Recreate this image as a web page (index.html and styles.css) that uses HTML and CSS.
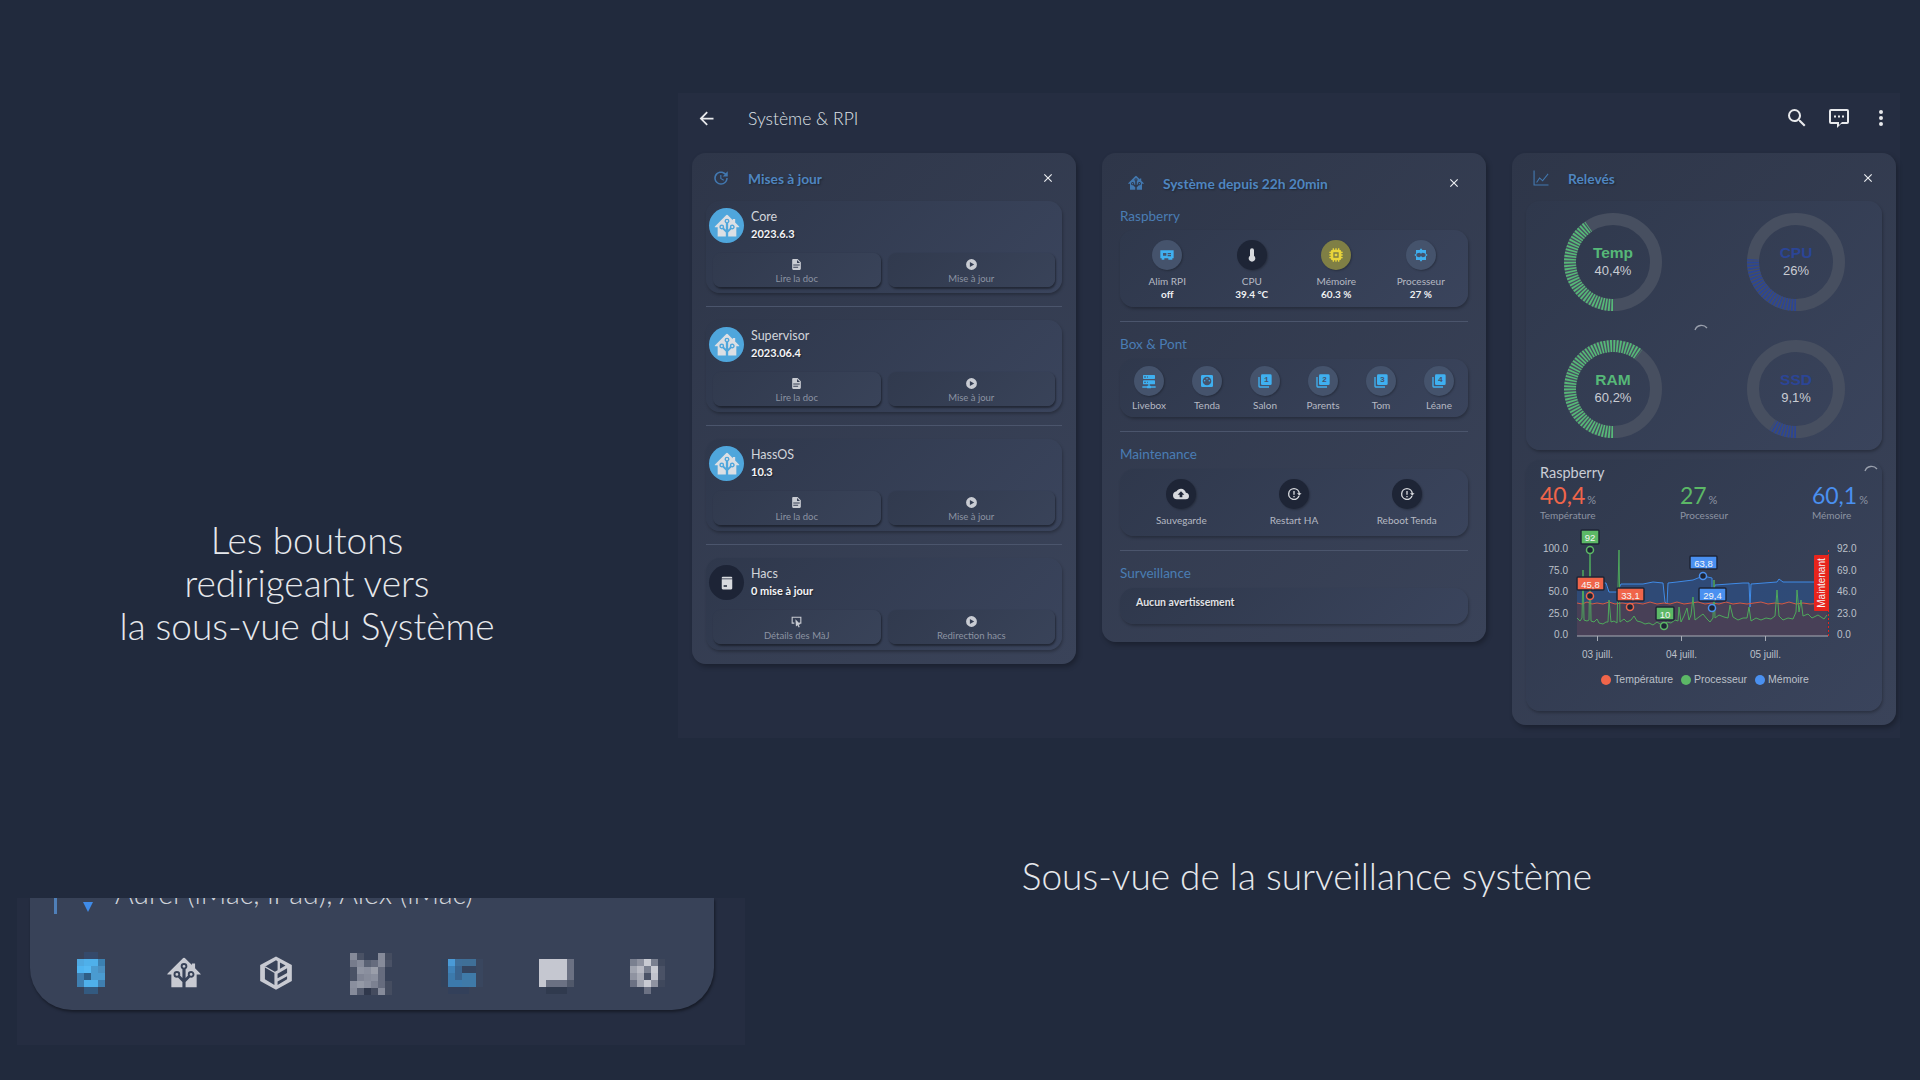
FILE: index.html
```html
<!DOCTYPE html>
<html lang="fr">
<head>
  <meta charset="UTF-8" />
  <title>Système &amp; RPI</title>
  <link rel="stylesheet" href="styles.css">
</head>
<body>
  <svg class="icon-defs" aria-hidden="true">
    <symbol id="i-ha" viewBox="0 0 24 24"><path d="M21.8,13H20V21H13V17.67L15.79,14.88L16.5,15C17.66,15 18.6,14.06 18.6,12.9C18.6,11.74 17.66,10.8 16.5,10.8A2.1,2.1 0 0,0 14.4,12.9L14.5,13.61L13,15.13V9.65C13.66,9.29 14.1,8.6 14.1,7.8A2.1,2.1 0 0,0 12,5.7A2.1,2.1 0 0,0 9.9,7.8C9.9,8.6 10.34,9.29 11,9.65V15.13L9.5,13.61L9.6,12.9A2.1,2.1 0 0,0 7.5,10.8A2.1,2.1 0 0,0 5.4,12.9A2.1,2.1 0 0,0 7.5,15L8.21,14.88L11,17.67V21H4V13H2.25C1.83,13 1.42,13 1.42,12.79C1.43,12.57 1.85,12.15 2.28,11.72L11,3C11.33,2.67 11.67,2.33 12,2.33C12.33,2.33 12.67,2.67 13,3L17,7V6H19V9L21.78,11.78C22.18,12.18 22.59,12.59 22.6,12.8C22.6,13 22.2,13 21.8,13M7.5,12A0.9,0.9 0 0,1 8.4,12.9A0.9,0.9 0 0,1 7.5,13.8A0.9,0.9 0 0,1 6.6,12.9A0.9,0.9 0 0,1 7.5,12M16.5,12C17,12 17.4,12.4 17.4,12.9C17.4,13.4 17,13.8 16.5,13.8A0.9,0.9 0 0,1 15.6,12.9A0.9,0.9 0 0,1 16.5,12M12,6.9C12.5,6.9 12.9,7.3 12.9,7.8C12.9,8.3 12.5,8.7 12,8.7C11.5,8.7 11.1,8.3 11.1,7.8C11.1,7.3 11.5,6.9 12,6.9Z"/></symbol>
    <symbol id="i-close" viewBox="0 0 24 24"><path d="M19,6.41L17.59,5L12,10.59L6.41,5L5,6.41L10.59,12L5,17.59L6.41,19L12,13.41L17.59,19L19,17.59L13.41,12L19,6.41Z"/></symbol>
    <symbol id="i-doc" viewBox="0 0 24 24"><path d="M13,9H18.5L13,3.5V9M6,2H14L20,8V20A2,2 0 0,1 18,22H6C4.89,22 4,21.1 4,20V4C4,2.89 4.89,2 6,2M15,18V16H6V18H15M18,14V12H6V14H18Z"/></symbol>
    <symbol id="i-play" viewBox="0 0 24 24"><path d="M12,2A10,10 0 0,0 2,12A10,10 0 0,0 12,22A10,10 0 0,0 22,12A10,10 0 0,0 12,2M9,16.5V7.5L17,12L9,16.5Z"/></symbol>
    <symbol id="i-restart" viewBox="0 0 24 24"><path d="M12,3A9,9 0 1,0 20.6,14.6H18.5A7,7 0 1,1 12,5A7,7 0 0,1 18.9,11H16.4L19.9,14.2L23.4,11H20.9A9,9 0 0,0 12,3M11,7.5H13V13H11V7.5M11,15H13V17H11V15Z"/></symbol>
    <symbol id="i-stack" viewBox="0 0 24 24"><path d="M2,6H4V20H18V22H4A2,2 0 0,1 2,20V6Z"/><path d="M8,2H20A2,2 0 0,1 22,4V16A2,2 0 0,1 20,18H8A2,2 0 0,1 6,16V4A2,2 0 0,1 8,2Z"/></symbol>
  </svg>

  <div class="top-row">
    <p class="caption intro">Les boutons<br>redirigeant vers<br>la sous-vue du Système</p>

    <main class="screen">
      <header class="topbar">
        <svg class="top-icon back" viewBox="0 0 24 24"><path d="M20,11V13H8L13.5,18.5L12.08,19.92L4.16,12L12.08,4.08L13.5,5.5L8,11H20Z"/></svg>
        <h1>Système &amp; RPI</h1>
        <svg class="top-icon" viewBox="0 0 24 24"><path d="M9.5,3A6.5,6.5 0 0,1 16,9.5C16,11.11 15.41,12.59 14.44,13.73L14.71,14H15.5L20.5,19L19,20.5L14,15.5V14.71L13.73,14.44C12.59,15.41 11.11,16 9.5,16A6.5,6.5 0 0,1 3,9.5A6.5,6.5 0 0,1 9.5,3M9.5,5C7,5 5,7 5,9.5C5,12 7,14 9.5,14C12,14 14,12 14,9.5C14,7 12,5 9.5,5Z"/></svg>
        <svg class="top-icon" viewBox="0 0 24 24"><path d="M4,3H20A2,2 0 0,1 22,5V16A2,2 0 0,1 20,18H14L10,22V18H4A2,2 0 0,1 2,16V5A2,2 0 0,1 4,3M4,5V16H12V19L15,16H20V5H4M7,9.5H9V11.5H7V9.5M11,9.5H13V11.5H11V9.5M15,9.5H17V11.5H15V9.5Z"/></svg>
        <svg class="top-icon" viewBox="0 0 24 24"><path d="M12,16A2,2 0 0,1 14,18A2,2 0 0,1 12,20A2,2 0 0,1 10,18A2,2 0 0,1 12,16M12,10A2,2 0 0,1 14,12A2,2 0 0,1 12,14A2,2 0 0,1 10,12A2,2 0 0,1 12,10M12,4A2,2 0 0,1 14,6A2,2 0 0,1 12,8A2,2 0 0,1 10,6A2,2 0 0,1 12,4Z"/></svg>
      </header>

      <div class="columns">
        <!-- mises a jour -->
        <section class="card">
          <div class="card-head">
            <svg class="head-icon" viewBox="0 0 24 24"><path d="M21,10.12H14.22L16.96,7.3C14.23,4.6 9.81,4.5 7.08,7.2C4.35,9.91 4.35,14.28 7.08,17C9.81,19.7 14.23,19.7 16.96,17C18.32,15.65 19,14.08 19,12.1H21C21,14.08 20.12,16.65 18.36,18.39C14.85,21.87 9.15,21.87 5.64,18.39C2.14,14.92 2.11,9.28 5.62,5.81C9.13,2.34 14.76,2.34 18.27,5.81L21,3V10.12M12.5,8V12.25L16,14.33L15.28,15.54L11,13V8H12.5Z"/></svg>
            <h2>Mises à jour</h2>
            <svg class="close"><use href="#i-close"/></svg>
          </div>

          <div class="update">
            <div class="update-info">
              <span class="avatar"><svg><use href="#i-ha"/></svg></span>
              <div><div class="update-name">Core</div><div class="update-version">2023.6.3</div></div>
            </div>
            <div class="update-actions">
              <div class="action"><svg><use href="#i-doc"/></svg><span>Lire la doc</span></div>
              <div class="action"><svg><use href="#i-play"/></svg><span>Mise à jour</span></div>
            </div>
          </div>
          <hr>
          <div class="update">
            <div class="update-info">
              <span class="avatar"><svg><use href="#i-ha"/></svg></span>
              <div><div class="update-name">Supervisor</div><div class="update-version">2023.06.4</div></div>
            </div>
            <div class="update-actions">
              <div class="action"><svg><use href="#i-doc"/></svg><span>Lire la doc</span></div>
              <div class="action"><svg><use href="#i-play"/></svg><span>Mise à jour</span></div>
            </div>
          </div>
          <hr>
          <div class="update">
            <div class="update-info">
              <span class="avatar"><svg><use href="#i-ha"/></svg></span>
              <div><div class="update-name">HassOS</div><div class="update-version">10.3</div></div>
            </div>
            <div class="update-actions">
              <div class="action"><svg><use href="#i-doc"/></svg><span>Lire la doc</span></div>
              <div class="action"><svg><use href="#i-play"/></svg><span>Mise à jour</span></div>
            </div>
          </div>
          <hr>
          <div class="update">
            <div class="update-info">
              <span class="avatar dark">
                <svg viewBox="0 0 24 24"><path d="M5,5A1.5,1.5 0 0,1 6.5,3.5H17.5A1.5,1.5 0 0,1 19,5V6H5V5M5,7H19V19A1.5,1.5 0 0,1 17.5,20.5H6.5A1.5,1.5 0 0,1 5,19V7M7.5,15V17H12V15H7.5Z"/></svg>
              </span>
              <div><div class="update-name">Hacs</div><div class="update-version">0 mise à jour</div></div>
            </div>
            <div class="update-actions">
              <div class="action">
                <svg viewBox="0 0 24 24"><path d="M3,3H21V16H17V14H19V5H5V14H8V16H3V3M10,8L19,17L16,18L18,22L16,23L14,19L11,21L10,8Z"/></svg>
                <span>Détails des MàJ</span>
              </div>
              <div class="action"><svg><use href="#i-play"/></svg><span>Redirection hacs</span></div>
            </div>
          </div>
        </section>

        <!-- systeme -->
        <section class="card card-system">
          <div class="card-head">
            <svg class="head-icon"><use href="#i-ha"/></svg>
            <h2>Système depuis 22h 20min</h2>
            <svg class="close"><use href="#i-close"/></svg>
          </div>

          <h3>Raspberry</h3>
          <div class="tiles tiles-rpi">
            <div class="tile">
              <span class="round blue"><svg viewBox="0 0 24 24"><path d="M2,5H22V17H20V19H14V17H8V19H4V17H2V5M6,9V13H11V9H6M13,9V11H18V9H13M13,12V14H18V12H13Z"/></svg></span>
              <span class="tile-label">Alim RPI</span><b>off</b>
            </div>
            <div class="tile">
              <span class="round dark"><svg viewBox="0 0 24 24"><path d="M15,13V5A3,3 0 0,0 9,5V13A5,5 0 1,0 15,13Z"/></svg></span>
              <span class="tile-label">CPU</span><b>39.4 °C</b>
            </div>
            <div class="tile">
              <span class="round yellow"><svg viewBox="0 0 24 24"><path d="M7,4H17A3,3 0 0,1 20,7H22V9H20V11H22V13H20V15H22V17H20A3,3 0 0,1 17,20V22H15V20H13V22H11V20H9V22H7V20A3,3 0 0,1 4,17H2V15H4V13H2V11H4V9H2V7H4A3,3 0 0,1 7,4M7,2H9V4H7V2M11,2H13V4H11V2M15,2H17V4H15V2M8,8V16H16V8H8M10,10H14V14H10V10Z" fill-rule="evenodd"/></svg></span>
              <span class="tile-label">Mémoire</span><b>60.3 %</b>
            </div>
            <div class="tile">
              <span class="round blue"><svg viewBox="0 0 24 24"><path d="M12,2L14,4.5H19.5V10L22,12L19.5,14V19.5H14L12,22L10,19.5H4.5V14L2,12L4.5,10V4.5H10L12,2M8,9A3,3 0 0,0 8,15A3,3 0 0,0 12,13.2A3,3 0 0,0 16,15A3,3 0 0,0 16,9A3,3 0 0,0 12,10.8A3,3 0 0,0 8,9Z"/></svg></span>
              <span class="tile-label">Processeur</span><b>27 %</b>
            </div>
          </div>
          <hr>

          <h3>Box &amp; Pont</h3>
          <div class="tiles tiles-box">
            <div class="tile">
              <span class="round blue"><svg viewBox="0 0 24 24"><path d="M13,19H14A1,1 0 0,1 15,20H22V22H15A1,1 0 0,1 14,23H10A1,1 0 0,1 9,22H2V20H9A1,1 0 0,1 10,19H11V17H4A1,1 0 0,1 3,16V12A1,1 0 0,1 4,11H20A1,1 0 0,1 21,12V16A1,1 0 0,1 20,17H13V19M4,3H20A1,1 0 0,1 21,4V8A1,1 0 0,1 20,9H4A1,1 0 0,1 3,8V4A1,1 0 0,1 4,3M9,7H10V5H9V7M9,15H10V13H9V15M5,5V7H7V5H5M5,13V15H7V13H5Z"/></svg></span>
              <span class="tile-label">Livebox</span>
            </div>
            <div class="tile">
              <span class="round blue"><svg viewBox="0 0 24 24"><path d="M5,3H19A2,2 0 0,1 21,5V19A2,2 0 0,1 19,21H5A2,2 0 0,1 3,19V5A2,2 0 0,1 5,3M12,5.5A6.5,6.5 0 1,0 12,18.5A6.5,6.5 0 1,0 12,5.5M8.5,10.5A1.2,1.2 0 1,1 8.5,12.9A1.2,1.2 0 1,1 8.5,10.5M15.5,10.5A1.2,1.2 0 1,1 15.5,12.9A1.2,1.2 0 1,1 15.5,10.5M12,7.5A1.2,1.2 0 1,1 12,9.9A1.2,1.2 0 1,1 12,7.5Z" fill-rule="evenodd"/></svg></span>
              <span class="tile-label">Tenda</span>
            </div>
            <div class="tile">
              <span class="round blue"><svg class="stack" viewBox="0 0 24 24"><use href="#i-stack"/><text x="14" y="14">1</text></svg></span>
              <span class="tile-label">Salon</span>
            </div>
            <div class="tile">
              <span class="round blue"><svg class="stack" viewBox="0 0 24 24"><use href="#i-stack"/><text x="14" y="14">2</text></svg></span>
              <span class="tile-label">Parents</span>
            </div>
            <div class="tile">
              <span class="round blue"><svg class="stack" viewBox="0 0 24 24"><use href="#i-stack"/><text x="14" y="14">3</text></svg></span>
              <span class="tile-label">Tom</span>
            </div>
            <div class="tile">
              <span class="round blue"><svg class="stack" viewBox="0 0 24 24"><use href="#i-stack"/><text x="14" y="14">4</text></svg></span>
              <span class="tile-label">Léane</span>
            </div>
          </div>
          <hr>

          <h3>Maintenance</h3>
          <div class="tiles tiles-maint">
            <div class="tile">
              <span class="round dark"><svg viewBox="0 0 24 24"><path d="M14,13V17H10V13H7L12,8L17,13H14M19.35,10.03C18.67,6.59 15.64,4 12,4C9.11,4 6.6,5.64 5.35,8.03C2.34,8.36 0,10.9 0,14A6,6 0 0,0 6,20H19A5,5 0 0,0 24,15C24,12.36 21.95,10.22 19.35,10.03Z"/></svg></span>
              <span class="tile-label">Sauvegarde</span>
            </div>
            <div class="tile">
              <span class="round dark"><svg><use href="#i-restart"/></svg></span>
              <span class="tile-label">Restart HA</span>
            </div>
            <div class="tile">
              <span class="round dark"><svg><use href="#i-restart"/></svg></span>
              <span class="tile-label">Reboot Tenda</span>
            </div>
          </div>
          <hr>

          <h3>Surveillance</h3>
          <div class="notice">Aucun avertissement</div>
        </section>

        <!-- releves -->
        <section class="card">
          <div class="card-head">
            <svg class="head-icon" viewBox="0 0 24 24"><path d="M2,2H3.5V20.5H22V22H2V2M5.5,17.5L10,11L14,14.5L21,6L22,7L14.2,16.5L10.3,13L6.7,18.3L5.5,17.5Z"/></svg>
            <h2>Relevés</h2>
            <svg class="close"><use href="#i-close"/></svg>
          </div>

          <div class="gauges">
            <svg class="gauge" viewBox="0 0 100 100">
              <circle class="track" cx="50" cy="50" r="43"/>
              <path class="arc green" d="M50,93A43,43 0 0,1 25.6,14.6"/>
              <text class="g-name green" x="50" y="46">Temp</text>
              <text class="g-val" x="50" y="63">40,4%</text>
            </svg>
            <svg class="gauge" viewBox="0 0 100 100">
              <circle class="track" cx="50" cy="50" r="43"/>
              <path class="arc navy" d="M50,93A43,43 0 0,1 7.1,47.3"/>
              <text class="g-name navy" x="50" y="46">CPU</text>
              <text class="g-val" x="50" y="63">26%</text>
            </svg>
            <svg class="gauge" viewBox="0 0 100 100">
              <circle class="track" cx="50" cy="50" r="43"/>
              <path class="arc green" d="M50,93A43,43 0 1,1 75.7,15.5"/>
              <text class="g-name green" x="50" y="46">RAM</text>
              <text class="g-val" x="50" y="63">60,2%</text>
            </svg>
            <svg class="gauge" viewBox="0 0 100 100">
              <circle class="track" cx="50" cy="50" r="43"/>
              <path class="arc navy" d="M50,93A43,43 0 0,1 26.7,86.2"/>
              <text class="g-name navy" x="50" y="46">SSD</text>
              <text class="g-val" x="50" y="63">9,1%</text>
            </svg>
            <svg class="spinner gauges-spinner" viewBox="0 0 16 16"><path d="M2,8A7,7 0 0,1 14,6"/></svg>
          </div>

          <div class="graph">
            <svg class="spinner graph-spinner" viewBox="0 0 16 16"><path d="M2,8A7,7 0 0,1 14,6"/></svg>
            <div class="graph-title">Raspberry</div>
            <div class="stats">
              <div class="stat"><div><span class="stat-num red">40,4</span><span class="stat-unit">%</span></div><div class="stat-label">Température</div></div>
              <div class="stat"><div><span class="stat-num green">27</span><span class="stat-unit">%</span></div><div class="stat-label">Processeur</div></div>
              <div class="stat"><div><span class="stat-num azure">60,1</span><span class="stat-unit">%</span></div><div class="stat-label">Mémoire</div></div>
            </div>

            <!-- viewBox in page coordinates so the series read straight off the reference -->
            <svg class="chart" viewBox="1527 525 354 142">
              <path class="area-blue" d="M1577,583H1606L1609,592H1617L1621,584H1643L1653,582L1663,583L1665,602L1667,604L1668,583L1677,582L1693,580L1703,576L1712,578L1712,600L1715,585L1743,583H1749L1750,607L1751,584L1777,582L1779,579L1783,582L1827,582V603H1577Z"/>
              <path class="area-red" d="M1577,603H1827V636H1577Z"/>
              <path class="line-blue" d="M1577,583H1606L1609,592H1617L1621,584H1643L1653,582L1663,583L1665,602L1667,604L1668,583L1677,582L1693,580L1703,576L1712,578L1712,600L1715,585L1743,583H1749L1750,607L1751,584L1777,582L1779,579L1783,582L1827,582"/>
              <path class="line-red" d="M1577,603L1582,604L1587,602L1592,604L1597,603L1603,604L1609,602L1615,604L1622,603L1629,604L1636,603L1643,604L1650,602L1657,604L1664,603L1670,604L1677,602L1684,604L1691,603L1698,602L1705,604L1712,603L1719,604L1726,602L1733,604L1740,603L1747,604L1754,603L1761,602L1768,604L1775,603L1782,604L1789,602L1796,604L1803,603L1810,604L1827,603"/>
              <path class="line-green" d="M1577,618L1580,621L1582,618L1583,570L1584,620L1587,621L1589,620L1590,550L1591,621L1594,622L1597,619L1599,623L1603,624L1606,622L1608,622L1609,600L1611,622L1614,621L1617,623L1619,550L1620,622L1624,619L1627,622L1631,620L1634,616L1637,621L1641,622L1645,624L1649,623L1653,625L1657,622L1660,624L1664,625L1667,622L1671,623L1675,620L1678,621L1679,607L1681,622L1684,616L1687,608L1689,620L1691,615L1693,597L1695,620L1699,617L1703,614L1707,619L1710,622L1713,618L1714,580L1715,618L1719,615L1724,617L1728,618L1730,605L1733,617L1738,620L1743,618L1747,618L1749,607L1751,621L1756,618L1761,620L1766,618L1771,619L1775,616L1777,590L1779,616L1783,620L1788,618L1793,619L1796,612L1797,590L1799,612L1801,600L1803,616L1808,614L1812,618L1818,615L1824,619L1827,615"/>

              <line class="axis" x1="1577" y1="636" x2="1828" y2="636"/>
              <line class="axis" x1="1597.5" y1="636" x2="1597.5" y2="641"/>
              <line class="axis" x1="1681.5" y1="636" x2="1681.5" y2="641"/>
              <line class="axis" x1="1765.5" y1="636" x2="1765.5" y2="641"/>
              <line class="now-line" x1="1828.5" y1="550" x2="1828.5" y2="636"/>

              <g class="y-left">
                <text x="1568" y="552">100.0</text><text x="1568" y="573.5">75.0</text><text x="1568" y="595">50.0</text><text x="1568" y="616.5">25.0</text><text x="1568" y="638">0.0</text>
              </g>
              <g class="y-right">
                <text x="1837" y="552">92.0</text><text x="1837" y="573.5">69.0</text><text x="1837" y="595">46.0</text><text x="1837" y="616.5">23.0</text><text x="1837" y="638">0.0</text>
              </g>
              <g class="x-labels">
                <text x="1597.5" y="658">03 juill.</text><text x="1681.5" y="658">04 juill.</text><text x="1765.5" y="658">05 juill.</text>
              </g>

              <circle class="mark m-green" cx="1590" cy="550" r="3.5"/>
              <circle class="mark m-red" cx="1590" cy="596" r="3.5"/>
              <circle class="mark m-red" cx="1630" cy="607" r="3.5"/>
              <circle class="mark m-green" cx="1664" cy="626" r="3.5"/>
              <circle class="mark m-blue" cx="1703" cy="576" r="3.5"/>
              <circle class="mark m-blue" cx="1712" cy="608" r="3.5"/>

              <rect class="tag t-green" x="1581" y="530" width="18" height="14" rx="1"/><text class="tag-text" x="1590" y="541">92</text>
              <rect class="tag t-red" x="1577" y="577" width="27" height="13" rx="1"/><text class="tag-text" x="1590.5" y="588">45,8</text>
              <rect class="tag t-red" x="1617" y="588" width="27" height="13" rx="1"/><text class="tag-text" x="1630.5" y="599">33,1</text>
              <rect class="tag t-green" x="1656" y="607" width="18" height="13" rx="1"/><text class="tag-text" x="1665" y="618">10</text>
              <rect class="tag t-blue" x="1690" y="556" width="27" height="13" rx="1"/><text class="tag-text" x="1703.5" y="567">63,8</text>
              <rect class="tag t-blue" x="1699" y="588" width="27" height="13" rx="1"/><text class="tag-text" x="1712.5" y="599">29,4</text>

              <rect class="now-box" x="1814" y="555" width="15" height="56" rx="1"/>
              <text class="now-text" transform="translate(1825,583) rotate(-90)">Maintenant</text>
            </svg>

            <div class="legend">
              <span><i class="dot bg-red"></i>Température</span>
              <span><i class="dot bg-green"></i>Processeur</span>
              <span><i class="dot bg-blue"></i>Mémoire</span>
            </div>
          </div>
        </section>
      </div>
    </main>
  </div>

  <div class="bottom-row">
    <div class="crop">
      <div class="nav-card">
        <i class="nav-bar"></i>
        <i class="nav-pin"></i>
        <div class="nav-text">Aurel (iMac, iPad), Alex (iMac)</div>
        <div class="nav-icons">
          <svg class="pixels w4" viewBox="0 0 4 6">
            <rect x="1" y="0" fill="#35496a"/><rect x="2" y="0" fill="#35496a"/>
            <rect x="0" y="1" fill="#4fa8e0"/><rect x="1" y="1" fill="#4fb0ea"/><rect x="2" y="1" fill="#4fb0ea"/><rect x="3" y="1" fill="#3c80b0"/>
            <rect x="0" y="2" fill="#4fb4f0"/><rect x="1" y="2" fill="#55b8f2"/><rect x="2" y="2" fill="#4a9bd0"/><rect x="3" y="2" fill="#4a8fc0"/>
            <rect x="0" y="3" fill="#3f7fb0"/><rect x="1" y="3" fill="#2f5e85"/><rect x="2" y="3" fill="#4a9bd0"/><rect x="3" y="3" fill="#4a9bd0"/>
            <rect x="0" y="4" fill="#3f7fb0"/><rect x="1" y="4" fill="#4fb0ea"/><rect x="2" y="4" fill="#4fb0ea"/><rect x="3" y="4" fill="#3f7fb0"/>
            <rect x="1" y="5" fill="#335a80"/><rect x="2" y="5" fill="#335a80"/>
          </svg>
          <svg class="nav-svg"><use href="#i-ha"/></svg>
          <svg class="nav-svg" viewBox="0 0 24 24"><path d="M12,1.5L22,7V17L12,22.5L2,17V7L12,1.5M12,4L5,8V16L11,19.5V12L5,8.5V7.5L11.3,11.2L13,10.2V4.6L12,4M14.5,5.4V9.3L18,7.3L14.5,5.4M19,9L13,12.5V15.3L19,12V9M19,14L13,17.3V19.5L19,16V14Z" fill-rule="evenodd"/></svg>
          <svg class="pixels w6" viewBox="0 0 6 6">
            <rect x="0" y="0" fill="#858a99"/><rect x="1" y="0" fill="#4a5265"/><rect x="4" y="0" fill="#858a99"/><rect x="5" y="0" fill="#454d60"/>
            <rect x="0" y="1" fill="#777c8c"/><rect x="1" y="1" fill="#858a99"/><rect x="2" y="1" fill="#5a6274"/><rect x="3" y="1" fill="#666c7e"/><rect x="4" y="1" fill="#868b9a"/><rect x="5" y="1" fill="#4a5266"/>
            <rect x="0" y="2" fill="#4a5265"/><rect x="1" y="2" fill="#8f94a2"/><rect x="2" y="2" fill="#8a8f9e"/><rect x="3" y="2" fill="#9a9eaa"/><rect x="4" y="2" fill="#666c7e"/>
            <rect x="0" y="3" fill="#4a5265"/><rect x="1" y="3" fill="#7f8494"/><rect x="2" y="3" fill="#868b9a"/><rect x="3" y="3" fill="#8a8f9e"/><rect x="4" y="3" fill="#666c7e"/>
            <rect x="0" y="4" fill="#8a8f9e"/><rect x="1" y="4" fill="#9499a6"/><rect x="2" y="4" fill="#8a8f9e"/><rect x="3" y="4" fill="#7c8191"/><rect x="4" y="4" fill="#666c7e"/><rect x="5" y="4" fill="#454d60"/>
            <rect x="0" y="5" fill="#868b9a"/><rect x="1" y="5" fill="#555c6f"/><rect x="2" y="5" fill="#30384c"/><rect x="3" y="5" fill="#444b5e"/><rect x="4" y="5" fill="#868b9a"/><rect x="5" y="5" fill="#454d60"/>
          </svg>
          <svg class="pixels w6 short" viewBox="0 0 6 5">
            <rect x="0" y="0" fill="#34425a"/><rect x="1" y="0" fill="#4a9ad6"/><rect x="2" y="0" fill="#3f6f9a"/><rect x="3" y="0" fill="#3f6f97"/><rect x="4" y="0" fill="#3f6f97"/><rect x="5" y="0" fill="#39465e"/>
            <rect x="0" y="1" fill="#34425a"/><rect x="1" y="1" fill="#3f82b8"/><rect x="2" y="1" fill="#3a6590"/><rect x="3" y="1" fill="#34445f"/><rect x="4" y="1" fill="#34445f"/><rect x="5" y="1" fill="#39465e"/>
            <rect x="0" y="2" fill="#34425a"/><rect x="1" y="2" fill="#3c7aac"/><rect x="2" y="2" fill="#3a6590"/><rect x="3" y="2" fill="#3f7aa8"/><rect x="4" y="2" fill="#3f7aa8"/><rect x="5" y="2" fill="#39465e"/>
            <rect x="0" y="3" fill="#34425a"/><rect x="1" y="3" fill="#3c7aac"/><rect x="2" y="3" fill="#3c7aac"/><rect x="3" y="3" fill="#3f7aa8"/><rect x="4" y="3" fill="#3f7aa8"/><rect x="5" y="3" fill="#39465e"/>
            <rect x="1" y="4" fill="#33405a"/><rect x="2" y="4" fill="#33405a"/><rect x="3" y="4" fill="#33405a"/>
          </svg>
          <svg class="pixels w5" viewBox="0 0 5 5">
            <rect x="0" y="0" fill="#c5c7d0"/><rect x="1" y="0" fill="#c5c7d0"/><rect x="2" y="0" fill="#c5c7d0"/><rect x="3" y="0" fill="#c5c7d0"/><rect x="4" y="0" fill="#6b7183"/>
            <rect x="0" y="1" fill="#c5c7d0"/><rect x="1" y="1" fill="#c5c7d0"/><rect x="2" y="1" fill="#c5c7d0"/><rect x="3" y="1" fill="#c5c7d0"/><rect x="4" y="1" fill="#6b7183"/>
            <rect x="0" y="2" fill="#c5c7d0"/><rect x="1" y="2" fill="#c5c7d0"/><rect x="2" y="2" fill="#c5c7d0"/><rect x="3" y="2" fill="#c5c7d0"/><rect x="4" y="2" fill="#6b7183"/>
            <rect x="0" y="3" fill="#c5c7d0"/><rect x="1" y="3" fill="#6b7183"/><rect x="2" y="3" fill="#6b7183"/><rect x="3" y="3" fill="#6b7183"/><rect x="4" y="3" fill="#50586a"/>
            <rect x="1" y="4" fill="#303a4e"/><rect x="2" y="4" fill="#303a4e"/><rect x="3" y="4" fill="#303a4e"/>
          </svg>
          <svg class="pixels w5" viewBox="0 0 5 5">
            <rect x="0" y="0" fill="#7a8090"/><rect x="1" y="0" fill="#8f93a1"/><rect x="2" y="0" fill="#c8cad2"/><rect x="3" y="0" fill="#7a8090"/><rect x="4" y="0" fill="#3f485c"/>
            <rect x="0" y="1" fill="#a0a4b0"/><rect x="1" y="1" fill="#b8bac4"/><rect x="2" y="1" fill="#7a8090"/><rect x="3" y="1" fill="#c8cad2"/><rect x="4" y="1" fill="#4a5266"/>
            <rect x="0" y="2" fill="#8f93a1"/><rect x="1" y="2" fill="#a8abb6"/><rect x="2" y="2" fill="#4a5266"/><rect x="3" y="2" fill="#c0c2cc"/><rect x="4" y="2" fill="#4a5266"/>
            <rect x="0" y="3" fill="#6b7183"/><rect x="1" y="3" fill="#a0a4b0"/><rect x="2" y="3" fill="#c8cad2"/><rect x="3" y="3" fill="#8f93a1"/><rect x="4" y="3" fill="#3f485c"/>
            <rect x="2" y="4" fill="#6b7183"/>
          </svg>
        </div>
      </div>
    </div>
    <p class="caption outro">Sous-vue de la surveillance système</p>
  </div>
</body>
</html>
```

FILE: styles.css
```css
* {
  box-sizing: border-box;
}

body {
  margin: 0;
  width: 1920px;
  height: 1080px;
  overflow: hidden;
  background-color: #212a3d;
  font-family: "Lato", "Open Sans", sans-serif;
  color: #c9cdd6;
}

.icon-defs {
  display: none;
}

svg {
  fill: currentColor;
}

/* slide layout */
.top-row {
  display: flex;
  padding-top: 93px;
  height: 738px;
}

.caption {
  margin: 0;
  font-size: 37px;
  font-weight: 300;
  line-height: 43px;
  color: #e6e8ec;
  text-align: center;
}

.intro {
  width: 614px;
  margin: 425px 64px 0 0;
}

.bottom-row {
  display: flex;
  padding-top: 116px;
}

.outro {
  width: 1124px;
}

/* screen */
.screen {
  width: 1222px;
  height: 645px;
  background-color: #252d41;
}

.topbar {
  display: flex;
  align-items: center;
  height: 60px;
  padding: 0 7px 10px 16px;
  color: #e8e9ec;
}

.topbar h1 {
  flex: 1;
  margin: 0 0 0 30px;
  font-size: 17.5px;
  font-weight: 300;
  color: #dfe1e6;
}

.top-icon {
  width: 24px;
  height: 24px;
  margin-left: 18px;
}

.top-icon.back {
  width: 21px;
  height: 21px;
  margin-left: 2px;
  margin-right: 1px;
}

.columns {
  display: flex;
  align-items: flex-start;
  gap: 26px;
  padding-left: 14px;
}

.card {
  width: 384px;
  padding: 0 14px 14px;
  border-radius: 14px;
  background: linear-gradient(135deg, #2e3649, #3a4359);
  box-shadow: 2px 3px 5px rgba(0, 0, 0, 0.28);
}

.card-head {
  display: flex;
  align-items: center;
  height: 48px;
  padding: 2px 0 0 6px;
}

.card-head h2 {
  flex: 1;
  margin: 0 0 0 18px;
  font-size: 13.8px;
  font-weight: 700;
  color: #4f86c0;
  text-shadow: 1px 1px 2px rgba(0, 0, 0, 0.35);
}

.head-icon {
  width: 18px;
  height: 18px;
  color: #4278b0;
}

.close {
  width: 14px;
  height: 14px;
  margin-right: 7px;
  color: #eceef1;
}

hr {
  height: 1px;
  margin: 13px 0;
  border: 0;
  background-color: #4b556c;
}

/* mises a jour */
.update {
  height: 92px;
  padding: 7px 7px 0 3px;
  border-radius: 14px;
  background: linear-gradient(135deg, #2f384c, #3a445c);
  box-shadow: 1px 2px 3px rgba(0, 0, 0, 0.25);
}

.update-info {
  display: flex;
  align-items: center;
  gap: 7px;
  height: 35px;
}

.update-info > div {
  margin-top: -2px;
}

.avatar {
  display: flex;
  align-items: center;
  justify-content: center;
  width: 35px;
  height: 35px;
  border-radius: 50%;
  background-color: #4fa6dc;
  color: #dcdfe4;
}

.avatar svg {
  width: 28px;
  height: 28px;
}

.avatar.dark {
  background-color: #1d2436;
}

.avatar.dark svg {
  width: 18px;
  height: 18px;
  color: #d8dadf;
}

.update-name {
  font-size: 12.5px;
  line-height: 17px;
  color: #d2d5db;
}

.update-version {
  font-size: 11px;
  font-weight: 700;
  line-height: 17px;
  color: #f4f5f7;
  text-shadow: 1px 1px 1px rgba(0, 0, 0, 0.4);
}

.update-actions {
  display: flex;
  gap: 7px;
  margin: 10px 0 0 4px;
}

.action {
  display: flex;
  flex: 1;
  flex-direction: column;
  align-items: center;
  height: 34px;
  padding-top: 5px;
  border-radius: 8px;
  background: linear-gradient(135deg, #313a4e, #394359);
  box-shadow: 1px 1.5px 2px rgba(0, 0, 0, 0.4);
  color: #c9ccd3;
}

.action svg {
  width: 13px;
  height: 13px;
}

.action span {
  margin-top: 1px;
  font-size: 9.5px;
  line-height: 13px;
  color: #8c93a2;
}

/* systeme */
.card-system {
  padding-left: 18px;
  padding-right: 18px;
  padding-bottom: 18px;
}

.card-system .card-head {
  height: 56px;
  padding: 4px 0 0 7px;
}

.card-system .card-head h2 {
  margin-left: 18px;
}

.card-system .close {
  margin-right: 7px;
}

.card-system hr {
  margin: 14px 0 0;
}

h3 {
  margin: 0;
  font-size: 13.5px;
  font-weight: 400;
  line-height: 14px;
  color: #4a7db4;
}

hr + h3 {
  margin-top: 15px;
}

.tiles {
  display: flex;
  margin-top: 7px;
  border-radius: 14px;
  background: linear-gradient(135deg, #2f384c, #3a445c);
  box-shadow: 1px 2px 3px rgba(0, 0, 0, 0.25);
}

hr + h3 + .tiles {
  margin-top: 8px;
}

.tiles-rpi {
  height: 77px;
  padding: 10px 5px 0;
}

.tiles-box {
  height: 58px;
  padding: 7px 0 0;
}

.tiles-maint {
  height: 67px;
  padding: 10px 5px 0;
}

.tile {
  display: flex;
  flex: 1;
  flex-direction: column;
  align-items: center;
}

.tile-label {
  margin-top: 5px;
  font-size: 10px;
  line-height: 13px;
  color: #b5b9c3;
}

.tile b {
  font-size: 10px;
  line-height: 13px;
  color: #eef0f2;
}

.tiles-box .tile-label {
  margin-top: 2px;
  line-height: 14px;
}

.tiles-maint .tile-label {
  margin-top: 5px;
}

.round {
  display: flex;
  align-items: center;
  justify-content: center;
  width: 30px;
  height: 30px;
  border-radius: 50%;
  box-shadow: 1px 1px 2px rgba(0, 0, 0, 0.25);
}

.round svg {
  width: 16px;
  height: 16px;
}

.round.blue {
  background-color: #45536c;
  color: #3fb0f0;
}

.round.dark {
  background-color: #1e2536;
  color: #d8dade;
}

.round.yellow {
  background-color: #7f7f45;
  color: #e8d43a;
}

.stack text {
  fill: #45536c;
  font-family: "Liberation Mono", monospace;
  font-size: 12px;
  font-weight: 700;
  text-anchor: middle;
}

.notice {
  height: 36px;
  margin-top: 8px;
  padding-left: 16px;
  border-radius: 14px;
  background: linear-gradient(135deg, #2f384c, #3a445c);
  box-shadow: 1px 2px 3px rgba(0, 0, 0, 0.25);
  font-size: 10.5px;
  font-weight: 700;
  line-height: 28px;
  color: #e0e2e6;
  text-shadow: 1px 1px 1px rgba(0, 0, 0, 0.4);
}

/* releves */
.gauges {
  position: relative;
  display: grid;
  grid-template-columns: 100px 100px;
  align-content: start;
  column-gap: 83px;
  row-gap: 27px;
  height: 249px;
  padding: 11px 0 0 37px;
  border-radius: 14px;
  background: linear-gradient(135deg, #2f384c, #3a445c);
  box-shadow: 1px 2px 3px rgba(0, 0, 0, 0.25);
}

.gauge {
  width: 100px;
  height: 100px;
}

.track {
  fill: none;
  stroke: #474f60;
  stroke-width: 12;
}

.arc {
  fill: none;
  stroke-width: 12;
  stroke-dasharray: 1.7 1.3;
}

.arc.green {
  stroke: #56b878;
}

.arc.navy {
  stroke: #2b4596;
}

.g-name,
.g-val {
  font-family: "Liberation Sans", sans-serif;
  text-anchor: middle;
}

.g-name {
  font-size: 15.5px;
  font-weight: 700;
}

.g-name.green {
  fill: #56b878;
}

.g-name.navy {
  fill: #2b4596;
}

.g-val {
  font-size: 13px;
  fill: #c9ccd3;
}

.spinner {
  position: absolute;
  width: 16px;
  height: 16px;
  fill: none;
  stroke: #9aa0ad;
  stroke-width: 1.3;
}

.gauges-spinner {
  left: 167px;
  top: 121px;
}

.graph-spinner {
  right: 3px;
  top: 3px;
}

.graph {
  position: relative;
  height: 251px;
  margin-top: 10px;
  padding: 4px 14px 0;
  border-radius: 14px;
  background: linear-gradient(135deg, #2f384c, #3a445c);
  box-shadow: 1px 2px 3px rgba(0, 0, 0, 0.25);
}

.graph-title {
  font-size: 14.5px;
  line-height: 17px;
  color: #c9cdd6;
}

.stats {
  display: flex;
  justify-content: space-between;
}

.stat-num {
  font-size: 23px;
  line-height: 28px;
}

.stat-unit {
  margin-left: 2px;
  font-size: 11px;
  color: #8c93a2;
}

.stat-label {
  font-size: 10px;
  line-height: 12px;
  color: #8c93a2;
}

.red {
  color: #f0654a;
}

.green {
  color: #5cb866;
}

.azure {
  color: #4a90f0;
}

.chart {
  display: block;
  width: 354px;
  height: 142px;
  margin: 4px 0 0 -13px;
  font-family: "Liberation Sans", sans-serif;
}

.chart path {
  fill: none;
}

.chart .area-blue {
  fill: #2e4d80;
  fill-opacity: 0.8;
}

.chart .area-red {
  fill: #4a4058;
  fill-opacity: 0.9;
}

.line-blue {
  stroke: #3f8be8;
  stroke-width: 1;
}

.line-red {
  stroke: #d65a44;
  stroke-width: 1;
}

.line-green {
  stroke: #4ea85c;
  stroke-width: 1;
}

.axis {
  stroke: #a8acb6;
  stroke-width: 1;
}

.now-line {
  stroke: #e8241c;
  stroke-width: 1;
  stroke-dasharray: 2 2;
}

.chart text {
  font-size: 10px;
  fill: #bcc0c9;
}

.y-left text {
  text-anchor: end;
}

.x-labels text {
  text-anchor: middle;
}

.mark {
  fill: #1e2536;
  stroke-width: 1.5;
}

.m-green {
  stroke: #5cb866;
}

.m-red {
  stroke: #f0654a;
}

.m-blue {
  stroke: #4a90f0;
}

.tag {
  stroke: #1e2536;
  stroke-width: 1.5;
}

.t-green {
  fill: #5cb866;
}

.t-red {
  fill: #f0654a;
}

.t-blue {
  fill: #4a90f0;
}

.chart .tag-text {
  font-size: 9.5px;
  fill: #f4f5f7;
  text-anchor: middle;
}

.now-box {
  fill: #e8241c;
}

.chart .now-text {
  font-size: 10px;
  fill: #f4f5f7;
  text-anchor: middle;
}

.legend {
  display: flex;
  justify-content: center;
  gap: 8px;
  margin-top: 6px;
  margin-left: 2px;
  font-family: "Liberation Sans", sans-serif;
  font-size: 10.5px;
  line-height: 13px;
  color: #bcc0c9;
}

.legend span {
  display: flex;
  align-items: center;
  gap: 3px;
}

.dot {
  width: 10px;
  height: 10px;
  border-radius: 50%;
}

.bg-red {
  background-color: #f0654a;
}

.bg-green {
  background-color: #5cb866;
}

.bg-blue {
  background-color: #4a90f0;
}

/* morceau de la vue principale */
.crop {
  flex: none;
  width: 728px;
  height: 147px;
  margin: 44px 0 0 17px;
  padding: 0 31px 0 13px;
  overflow: hidden;
  background-color: #252d41;
}

.nav-card {
  position: relative;
  height: 112px;
  border-radius: 0 0 42px 42px;
  background-color: #384258;
  box-shadow: 1px 2px 3px rgba(0, 0, 0, 0.4);
}

.nav-bar {
  position: absolute;
  left: 24px;
  top: 0;
  width: 3px;
  height: 16px;
  background-color: #4f7fb8;
}

.nav-pin {
  position: absolute;
  left: 53px;
  top: 4px;
  width: 10px;
  height: 10px;
  background-color: #3f8be8;
  clip-path: polygon(0 0, 100% 0, 50% 100%);
}

.nav-text {
  position: absolute;
  left: 85px;
  top: -22px;
  font-size: 28.5px;
  font-weight: 300;
  line-height: 34px;
  white-space: nowrap;
  color: #d2d5db;
}

.nav-icons {
  position: absolute;
  left: 0;
  right: 0;
  top: 54px;
  height: 42px;
}

.nav-icons svg {
  position: absolute;
}

.nav-svg {
  width: 38px;
  height: 38px;
  top: 2px;
  color: #c8cad2;
}

.nav-icons svg:nth-child(1) { left: 47px; top: 0; }
.nav-icons svg:nth-child(2) { left: 135px; }
.nav-icons svg:nth-child(3) { left: 227px; }
.nav-icons svg:nth-child(4) { left: 320px; top: 1px; }
.nav-icons svg:nth-child(5) { left: 411px; top: 7px; }
.nav-icons svg:nth-child(6) { left: 509px; top: 7px; }
.nav-icons svg:nth-child(7) { left: 600px; top: 7px; }

.pixels {
  shape-rendering: crispEdges;
  overflow: visible;
}

.pixels rect {
  width: 1px;
  height: 1px;
}

.pixels.w4 {
  width: 28px;
  height: 42px;
}

.pixels.w6 {
  width: 42px;
  height: 42px;
}

.pixels.w6.short {
  height: 35px;
}

.pixels.w5 {
  width: 35px;
  height: 35px;
}
```
